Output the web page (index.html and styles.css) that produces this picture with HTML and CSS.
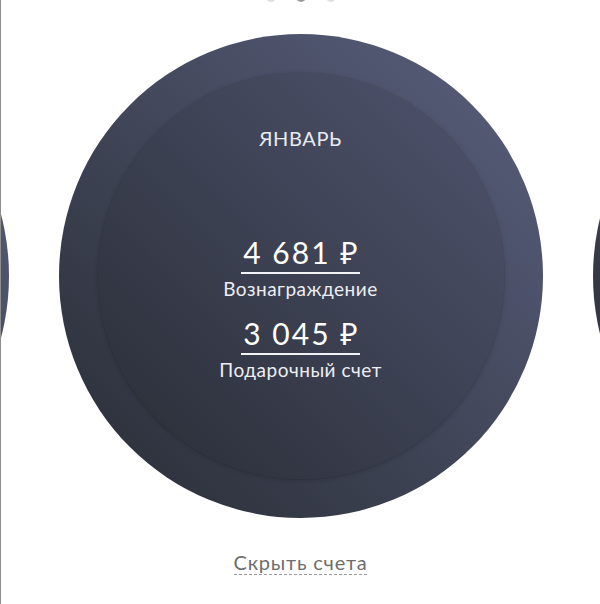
FILE: index.html
```html
<!DOCTYPE html>
<html lang="ru">
<head>
    <meta charset="UTF-8">
    <meta name="viewport" content="width=device-width, initial-scale=1.0">
    <title>Счета</title>
    <link rel="stylesheet" href="styles.css">
</head>
<body>

    <!-- точки пагинации (видны только краем) -->
    <div class="dots">
        <span class="dot"></span>
        <span class="dot active"></span>
        <span class="dot"></span>
    </div>

    <!-- карусель месяцев -->
    <div class="carousel">
        <div class="slide">
            <div class="slide-inner"></div>
        </div>

        <div class="slide">
            <div class="slide-inner">
                <div class="month">Январь</div>
                <div class="amounts">
                    <div class="amount-item">
                        <div class="amount">4 681 ₽</div>
                        <div class="amount-label">Вознаграждение</div>
                    </div>
                    <div class="amount-item">
                        <div class="amount">3 045 ₽</div>
                        <div class="amount-label">Подарочный счет</div>
                    </div>
                </div>
            </div>
        </div>

        <div class="slide">
            <div class="slide-inner"></div>
        </div>
    </div>

    <!-- ссылка скрытия -->
    <div class="toggle">
        <a class="toggle-link" href="#">Скрыть счета</a>
    </div>

</body>
</html>
```

FILE: styles.css
```css
html {
    overflow: hidden;
}

body {
    margin: 0;
    height: 604px;
    box-sizing: border-box;
    border-left: 1px solid #8e8e8e;
    background-color: #fff;
    font-family: 'Lato', 'Noto Sans', sans-serif;
    overflow: hidden;
}

.dots {
    display: flex;
    justify-content: center;
    gap: 20px;
    margin-top: -8px;
}

.dot {
    width: 10px;
    height: 10px;
    border-radius: 50%;
    background-color: #dedede;
}

.dot.active {
    background-color: #9a9a9a;
}

.carousel {
    display: flex;
    justify-content: center;
    gap: 50px;
    margin-top: 32px;
}

.slide {
    flex: none;
    width: 484px;
    height: 484px;
    padding: 39px;
    box-sizing: border-box;
    border-radius: 50%;
    background: linear-gradient(to top right, #30343f 15%, #555b77 90%);
    display: flex;
}

.slide-inner {
    flex: 1;
    border-radius: 50%;
    background: linear-gradient(to top right, #2f333e 15%, #4b5069 90%);
    box-shadow: 0 0 0 1px rgba(0, 0, 0, 0.06), 0 1px 5px rgba(0, 0, 0, 0.18);
    display: flex;
    flex-direction: column;
    align-items: center;
    padding-top: 53px;
    box-sizing: border-box;
    color: #fff;
}

.month {
    font-size: 20px;
    line-height: 24px;
    letter-spacing: 0.6px;
    text-transform: uppercase;
    color: #e9ebf1;
}

.amounts {
    margin-top: 87px;
    display: flex;
    flex-direction: column;
    gap: 18px;
}

.amount-item {
    display: flex;
    flex-direction: column;
    align-items: center;
}

.amount {
    font-size: 30px;
    line-height: 30px;
    padding-bottom: 5px;
    border-bottom: 2px solid #f2f3f7;
    letter-spacing: 2px;
    padding-left: 2px;
}

.amount-label {
    margin-top: 4px;
    font-size: 19px;
    line-height: 22px;
    letter-spacing: 0.5px;
    color: #eceef3;
}

.toggle {
    display: flex;
    justify-content: center;
    margin-top: 32px;
}

.toggle-link {
    font-size: 20px;
    line-height: 24px;
    letter-spacing: 0.8px;
    color: #6d6d6d;
    text-decoration: none;
    border-bottom: 1px dashed #9a9a9a;
}
```
